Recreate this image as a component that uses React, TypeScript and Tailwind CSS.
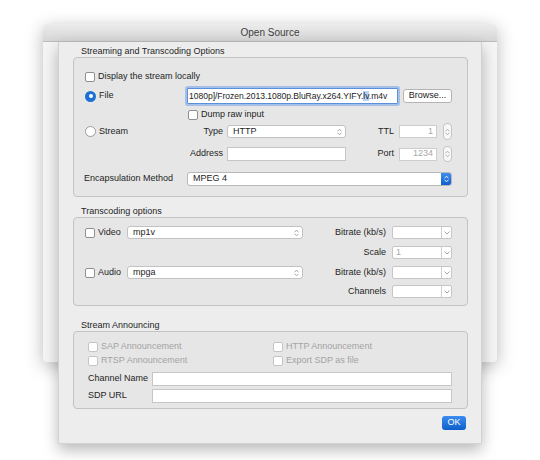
import React from "react";

const UpDown = ({ color = "#7a7a7a" }: { color?: string }) => (
  <svg width="5" height="8" viewBox="0 0 5 8" fill="none">
    <path d="M0.8 3 L2.5 1.2 L4.2 3 M0.8 5 L2.5 6.8 L4.2 5" stroke={color} strokeWidth="0.9" strokeLinecap="round" strokeLinejoin="round" />
  </svg>
);

const Down = () => (
  <svg width="6" height="4" viewBox="0 0 6 4" fill="none">
    <path d="M0.8 0.8 L3 3 L5.2 0.8" stroke="#9a9a9a" strokeWidth="0.9" strokeLinecap="round" strokeLinejoin="round" />
  </svg>
);

const Check = ({ disabled = false }: { disabled?: boolean }) => (
  <div
    className={`w-[10px] h-[10px] rounded-[2px] border bg-white shrink-0 ${
      disabled ? "border-[#c4c4c4]" : "border-[#8f8f8f]"
    }`}
  />
);

const Popup = ({ value, w, h }: { value: string; w: string; h: string }) => (
  <div className={`${w} ${h} flex items-center justify-between rounded-[3px] border border-[#c2c2c2] bg-white pl-[5px] pr-[3px] shrink-0`}>
    <span className="text-[9px] text-[#262626] leading-none">{value}</span>
    <UpDown color="#9a9a9a" />
  </div>
);

const Combo = ({ value = "", h = "h-[13px]" }: { value?: string; h?: string }) => (
  <div className={`w-[60px] ${h} flex rounded-[2px] border border-[#c6c6c6] bg-white shrink-0 overflow-hidden`}>
    <div className="flex-1 flex items-center pl-[3px] text-[9px] text-[#a8a8a8] leading-none">{value}</div>
    <div className="w-[10px] border-l border-[#d0d0d0] flex items-center justify-center">
      <Down />
    </div>
  </div>
);

const Stepper = ({ h }: { h: string }) => (
  <div className={`w-[9px] ${h} rounded-[4px] border border-[#c4c4c4] bg-[#f8f8f8] flex flex-col items-center justify-center shrink-0`}>
    <UpDown color="#a8a8a8" />
  </div>
);

const Label = ({ children }: { children: React.ReactNode }) => (
  <div className="h-[12px] leading-[12px] pl-[8px] text-[9px] text-[#1e1e1e]">{children}</div>
);

export default function App() {
  return (
    <div className="relative w-[540px] h-[460px] bg-white overflow-hidden font-['Liberation_Sans',Arial,sans-serif]">
      {/* back window */}
      <div className="absolute left-[43px] top-[24px] w-[454px] h-[338px] rounded-t-[5px] rounded-b-[4px] bg-[#f5f5f5] shadow-[0_4px_18px_rgba(0,0,0,0.28)] overflow-hidden">
        <div className="h-[18px] bg-gradient-to-b from-[#ececec] to-[#d6d6d6] border-b border-[#bcbcbc] flex items-center justify-center">
          <span className="text-[10px] text-[#404040]">Open Source</span>
        </div>
      </div>

      {/* sheet */}
      <div className="absolute left-[58px] top-[42px] w-[424px] h-[402px] bg-[#ededed] border-x border-b border-[#d2d2d2] shadow-[0_6px_14px_rgba(0,0,0,0.28)] flex flex-col pl-[14px] pt-[3px]">
        <Label>Streaming and Transcoding Options</Label>
        {/* box 1 */}
        <div className="w-[395px] h-[140px] rounded-[4px] border border-[#c3c3c3] bg-[#e6e6e6] flex flex-col pl-[11px] text-[9px] text-[#1e1e1e]">
          <div className="mt-[12px] h-[13px] flex items-center gap-[3px]">
            <Check />
            <span>Display the stream locally</span>
          </div>
          <div className="mt-[4px] h-[18px] flex items-center">
            <div className="w-[102px] flex items-center gap-[3px]">
              <div className="w-[11px] h-[11px] rounded-full bg-[#1d6fd6] flex items-center justify-center">
                <div className="w-[4px] h-[4px] rounded-full bg-white" />
              </div>
              <span>File</span>
            </div>
            <div className="w-[211px] h-[16px] bg-white border border-[#5b8fd8] shadow-[0_0_0_2px_rgba(110,160,230,0.55)] flex items-center overflow-hidden whitespace-nowrap pl-[1px] rounded-[1px]">
              <span className="text-[8.6px] tracking-[-0.05px] text-[#1e1e1e]">
                1080p]/Frozen.2013.1080p.BluRay.x264.YIFY.<span className="bg-[#b6d3f7]">lv</span>.m4v
              </span>
            </div>
            <div className="ml-[5px] w-[49px] h-[14px] rounded-[3px] border border-[#b3b3b3] bg-white flex items-center justify-center text-[9px] text-[#222]">
              Browse...
            </div>
          </div>
          <div className="mt-[4px] h-[12px] flex items-center">
            <div className="w-[103px]" />
            <Check />
            <span className="ml-[3px]">Dump raw input</span>
          </div>
          <div className="mt-[2px] h-[17px] flex items-center">
            <div className="w-[102px] flex items-center gap-[3px]">
              <div className="w-[11px] h-[11px] rounded-full bg-white border border-[#9a9a9a]" />
              <span>Stream</span>
            </div>
            <div className="w-[36px] text-right">Type</div>
            <div className="ml-[4px]">
              <Popup value="HTTP" w="w-[119px]" h="h-[13px]" />
            </div>
            <div className="w-[48px] text-right">TTL</div>
            <div className="ml-[5px] w-[38px] h-[13px] bg-white border border-[#cdcdcd] flex items-center justify-end pr-[3px] text-[#a8a8a8]">1</div>
            <div className="ml-[6px]">
              <Stepper h="h-[17px]" />
            </div>
          </div>
          <div className="mt-[5px] h-[18px] flex items-center">
            <div className="w-[102px]" />
            <div className="w-[36px] text-right">Address</div>
            <div className="ml-[4px] w-[119px] h-[14px] bg-white border border-[#c6c6c6]" />
            <div className="w-[48px] text-right">Port</div>
            <div className="ml-[5px] w-[38px] h-[13px] bg-white border border-[#cdcdcd] flex items-center justify-end pr-[3px] text-[#a8a8a8]">1234</div>
            <div className="ml-[6px]">
              <Stepper h="h-[16px]" />
            </div>
          </div>
          <div className="mt-[8px] h-[16px] flex items-center">
            <div className="w-[102px] -ml-[1px]">Encapsulation Method</div>
            <div className="ml-[1px] w-[265px] h-[14px] flex rounded-[3px] border border-[#b8b8b8] bg-white overflow-hidden">
              <div className="flex-1 flex items-center pl-[5px]">MPEG 4</div>
              <div className="w-[10px] bg-gradient-to-b from-[#3d8ef2] to-[#0e5fcc] flex items-center justify-center">
                <UpDown color="#ffffff" />
              </div>
            </div>
          </div>
        </div>

        <div className="mt-[8px]">
          <Label>Transcoding options</Label>
        </div>
        {/* box 2 */}
        <div className="w-[395px] h-[89px] rounded-[4px] border border-[#c3c3c3] bg-[#e6e6e6] flex flex-col pl-[11px] pt-[8px] text-[9px] text-[#1e1e1e]">
          <div className="h-[13px] flex items-center">
            <div className="w-[42px] flex items-center gap-[3px]">
              <Check />
              <span>Video</span>
            </div>
            <Popup value="mp1v" w="w-[176px]" h="h-[13px]" />
            <div className="w-[83px] text-right">Bitrate (kb/s)</div>
            <div className="ml-[6px]">
              <Combo />
            </div>
          </div>
          <div className="mt-[7px] h-[13px] flex items-center">
            <div className="w-[218px]" />
            <div className="w-[83px] text-right">Scale</div>
            <div className="ml-[6px]">
              <Combo value="1" />
            </div>
          </div>
          <div className="mt-[7px] h-[13px] flex items-center">
            <div className="w-[42px] flex items-center gap-[3px]">
              <Check />
              <span>Audio</span>
            </div>
            <Popup value="mpga" w="w-[176px]" h="h-[13px]" />
            <div className="w-[83px] text-right">Bitrate (kb/s)</div>
            <div className="ml-[6px]">
              <Combo />
            </div>
          </div>
          <div className="mt-[6px] h-[13px] flex items-center">
            <div className="w-[218px]" />
            <div className="w-[83px] text-right">Channels</div>
            <div className="ml-[6px]">
              <Combo />
            </div>
          </div>
        </div>

        <div className="mt-[13px]">
          <Label>Stream Announcing</Label>
        </div>
        {/* box 3 */}
        <div className="w-[395px] h-[78px] rounded-[4px] border border-[#c3c3c3] bg-[#e6e6e6] flex flex-col pl-[14px] pt-[9px] text-[9px] text-[#1e1e1e]">
          <div className="h-[12px] flex items-center">
            <div className="w-[185px] flex items-center gap-[3px] text-[#a3a3a3]">
              <Check disabled />
              <span>SAP Announcement</span>
            </div>
            <div className="flex items-center gap-[3px] text-[#a3a3a3]">
              <Check disabled />
              <span>HTTP Announcement</span>
            </div>
          </div>
          <div className="mt-[2px] h-[12px] flex items-center">
            <div className="w-[185px] flex items-center gap-[3px] text-[#a3a3a3]">
              <Check disabled />
              <span>RTSP Announcement</span>
            </div>
            <div className="flex items-center gap-[3px] text-[#a3a3a3]">
              <Check disabled />
              <span>Export SDP as file</span>
            </div>
          </div>
          <div className="mt-[5px] h-[14px] flex items-center">
            <div className="w-[64px]">Channel Name</div>
            <div className="w-[300px] h-[14px] bg-white border border-[#c6c6c6]" />
          </div>
          <div className="mt-[3px] h-[14px] flex items-center">
            <div className="w-[64px]">SDP URL</div>
            <div className="w-[300px] h-[14px] bg-white border border-[#c6c6c6]" />
          </div>
        </div>

        <div className="mt-[7px] w-[395px] flex justify-end pr-[2px]">
          <div className="w-[24px] h-[14px] rounded-[3px] bg-gradient-to-b from-[#3a8cf0] to-[#0d5fcb] flex items-center justify-center text-[9px] text-white">
            OK
          </div>
        </div>
      </div>
    </div>
  );
}
